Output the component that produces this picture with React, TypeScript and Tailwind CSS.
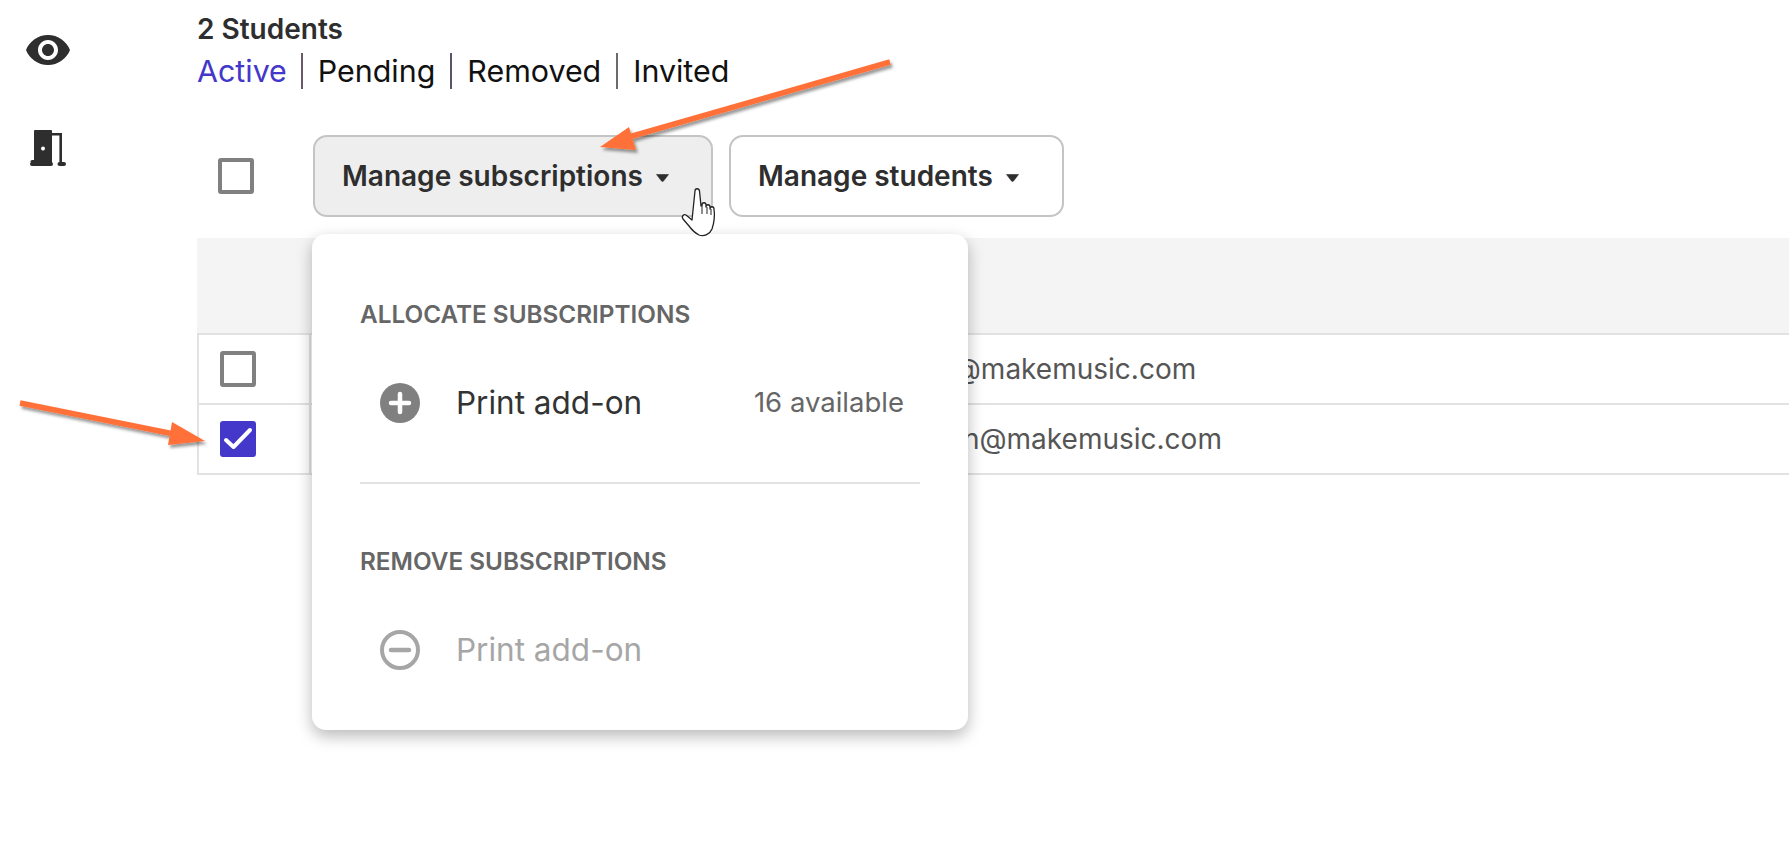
import React from "react";

function Eye() {
  return (
    <svg viewBox="0 0 24 24" className="w-[48px] h-[48px]" fill="#2e2e2e">
      <path d="M12 4.5C7 4.5 2.73 7.61 1 12c1.73 4.39 6 7.5 11 7.5s9.27-3.11 11-7.5c-1.73-4.39-6-7.5-11-7.5zM12 17c-2.76 0-5-2.24-5-5s2.24-5 5-5 5 2.24 5 5-2.24 5-5 5zm0-8c-1.66 0-3 1.34-3 3s1.34 3 3 3 3-1.34 3-3-1.34-3-3-3z" />
    </svg>
  );
}

function Door() {
  return (
    <svg viewBox="0 0 36 36" className="w-[36px] h-[36px]">
      <path fill="#2e2e2e" fillRule="evenodd" d="M5 0h16a1 1 0 0 1 1 1v31h0v1H2a1.5 1.5 0 0 1 0-3h2V1a1 1 0 0 1 1-1zm10 18.5a2 2 0 1 0 0 .01z" />
      <rect x="0" y="32" width="23" height="4" rx="2" fill="#2e2e2e" />
      <path fill="none" stroke="#2e2e2e" strokeWidth="2.6" d="M22 4.300h8.700V33" />
      <rect x="27.500" y="32" width="8.500" height="4" rx="2" fill="#2e2e2e" />
    </svg>
  );
}

function Checkbox({ checked }: { checked?: boolean }) {
  if (checked) {
    return (
      <div className="w-[36px] h-[36px] rounded-[3px] bg-[#4338c9] flex items-center justify-center">
        <svg viewBox="0 0 36 36" className="w-[36px] h-[36px]">
          <path d="M6 19l7.500 7L30 9" fill="none" stroke="#fff" strokeWidth="4" strokeLinecap="round" strokeLinejoin="round" />
        </svg>
      </div>
    );
  }
  return <div className="w-[36px] h-[36px] rounded-[3px] border-[4px] border-[#808080] bg-white" />;
}

function Caret() {
  return (
    <svg viewBox="0 0 13 8" className="w-[13px] h-[8px] mt-[3px]">
      <path d="M0.500 0.500h12L7.500 7a1.400 1.400 0 0 1-2 0z" fill="#2e2e2e" stroke="#2e2e2e" strokeWidth="0.6" strokeLinejoin="round" />
    </svg>
  );
}

function Row({ email, checked }: { email: string; checked?: boolean }) {
  return (
    <div className="flex h-[70px] border-b-2 border-[#e2e2e2]">
      <div className="w-[114px] shrink-0 border-l-2 border-r-2 border-[#e2e2e2] flex items-center pl-[21px]">
        <Checkbox checked={checked} />
      </div>
      <div className="flex-1 flex items-center pl-[489px] text-[28px] text-[#555555]">{email}</div>
    </div>
  );
}

function Heading({ children }: { children: React.ReactNode }) {
  return <div className="text-[24.3px] leading-[28px] font-semibold text-[#666666]">{children}</div>;
}

export default function App() {
  return (
    <div className="relative h-[844px] overflow-hidden bg-white flex font-['Inter',sans-serif] text-[#2e2e2e]">
      <aside className="w-[197px] shrink-0 flex flex-col pl-[24px] pt-[26px]">
        <Eye />
        <div className="mt-[56px] ml-[6px]">
          <Door />
        </div>
      </aside>

      <main className="flex-1 min-w-0 pt-[13px]">
        <div className="text-[28px] leading-[32px] font-semibold">2 Students</div>
        <nav className="flex items-center h-[36px] mt-[8px] text-[30.400px] text-[#111111]">
          <span className="pr-[14px] h-[36px] leading-[36px] text-[#4338c9]">Active</span>
          <span className="px-[15px] border-l-2 border-[#6b5a6b] h-[36px] leading-[36px]">Pending</span>
          <span className="px-[15px] border-l-2 border-[#55556b] h-[36px] leading-[36px]">Removed</span>
          <span className="px-[15px] border-l-2 border-[#6b6b6b] h-[36px] leading-[36px]">Invited</span>
        </nav>

        <div className="flex items-center mt-[46px] pl-[21px]">
          <Checkbox />
          <div className="relative ml-[59px]">
            <button className="w-[400px] h-[82px] rounded-[14px] border-2 border-[#c4c4c4] bg-[#eeeeee] flex items-center pl-[27px] gap-[13px] text-[28px] font-semibold">
              Manage subscriptions
              <Caret />
            </button>
            <div className="absolute z-10 left-[-1px] top-[99px] w-[656px] h-[496px] rounded-[14px] bg-white shadow-[0_6px_16px_rgba(0,0,0,0.28)] px-[48px] pt-[66px]">
              <Heading>ALLOCATE SUBSCRIPTIONS</Heading>
              <div className="flex items-center h-[40px] mt-[55px] pl-[20px] text-[31.500px] text-[#333333]">
                <svg viewBox="0 0 40 40" className="w-[40px] h-[40px] shrink-0">
                  <circle cx="20" cy="20" r="20" fill="#808080" />
                  <path d="M20 11v18M11 20h18" stroke="#fff" strokeWidth="4.500" strokeLinecap="round" />
                </svg>
                <span className="ml-[36px]">Print add-on</span>
                <span className="ml-auto mr-[16px] text-[27.500px] text-[#666666]">16 available</span>
              </div>
              <div className="h-[2px] bg-[#e2e2e2] mt-[59px]" />
              <div className="mt-[63px]">
                <Heading>REMOVE SUBSCRIPTIONS</Heading>
              </div>
              <div className="flex items-center h-[40px] mt-[55px] pl-[20px] text-[31.500px] text-[#a6a6a6]">
                <svg viewBox="0 0 40 40" className="w-[40px] h-[40px] shrink-0">
                  <circle cx="20" cy="20" r="18" fill="none" stroke="#a6a6a6" strokeWidth="4" />
                  <path d="M11 20h18" stroke="#a6a6a6" strokeWidth="4.500" strokeLinecap="round" />
                </svg>
                <span className="ml-[36px]">Print add-on</span>
              </div>
            </div>
          </div>
          <button className="ml-[16px] w-[335px] h-[82px] rounded-[14px] border-2 border-[#c4c4c4] bg-white flex items-center pl-[27px] gap-[13px] text-[28px] font-semibold">
            Manage students
            <Caret />
          </button>
        </div>

        <div className="mt-[21px]">
          <div className="h-[95px] bg-[#f4f4f4]" />
          <div className="border-t-2 border-[#e2e2e2]">
            <Row email="student.smi@makemusic.com" />
            <Row email="student.smith@makemusic.com" checked />
          </div>
        </div>
      </main>

      <svg className="absolute z-20 left-0 top-0 w-[1789px] h-[844px] pointer-events-none" viewBox="0 0 1789 844">
        <defs>
          <filter id="arrowShadow" x="-10%" y="-30%" width="120%" height="160%">
            <feDropShadow dx="2" dy="3" stdDeviation="1.500" floodColor="#000" floodOpacity="0.4" />
          </filter>
        </defs>
        <g filter="url(#arrowShadow)">
          <line x1="890" y1="62" x2="622" y2="139" stroke="#ff7139" strokeWidth="5.500" />
          <path d="M600 147l29-20 7 23z" fill="#ff7139" />
          <line x1="20" y1="403" x2="174" y2="434" stroke="#ff7139" strokeWidth="5.500" />
          <path d="M205 441l-33-19-4 23z" fill="#ff7139" />
        </g>
        <g transform="translate(2 1)">
          <path
            d="M693 190c0-3 4-3 4.500 0l1.500 15 1-1c0-3 4-3 4 0v2c0-3 4-3 4 0v2c0-3 4-3 4 0 1 7 0 14-2 20-2 5-8 8-13 6-4-2-7-5-10-9l-6-7c-2-3 1-5 3-4l6 5z"
            fill="#fff"
            stroke="#222"
            strokeWidth="1.300"
            strokeLinejoin="round"
          />
          <path d="M700 204v9M705 206v7M709 208v6" stroke="#222" strokeWidth="1" fill="none" />
        </g>
      </svg>
    </div>
  );
}
